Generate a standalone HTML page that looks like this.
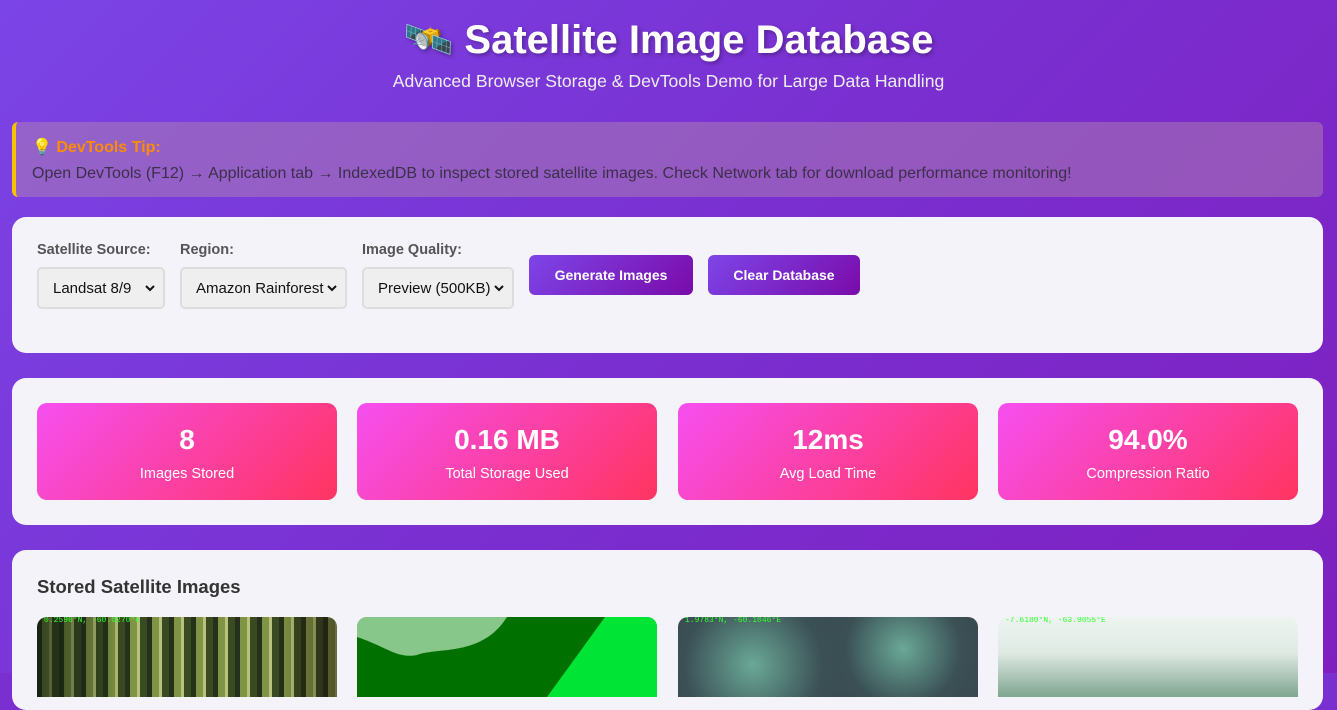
<!DOCTYPE html>
<html style="background:#7a2fd0"><head><meta charset="utf-8"><style>
*{box-sizing:border-box;margin:0;padding:0}
html,body{width:1337px;height:673px;overflow:hidden}
body{font-family:"Liberation Sans",sans-serif;background:linear-gradient(135deg,#7b44e6 0%,#7a2fd0 50%,#7f1fc0 100%);}
h1{text-align:center;color:#fff;font-size:40px;font-weight:bold;padding-top:16px;height:62px;text-shadow:2px 2px 4px rgba(0,0,0,.3)}
.sub{text-align:center;color:#eee;font-size:17.6px;height:60px;padding-top:9px}
.tip{position:absolute;left:12px;top:122px;width:1311px;height:75px;background:rgba(180,140,170,.45);border-left:4px solid #f5c400;border-radius:6px;padding:15px 16px}
.tip b{color:#ff8c00;font-size:16px}
.tip p{color:#3b2f4a;font-size:16px;margin-top:8px}
.panel{position:absolute;left:12px;width:1311px;background:#f5f3fa;border-radius:14px}
label{display:block;font-size:14.5px;font-weight:bold;color:#555;margin-bottom:9px}
.sel{height:42px;border:2px solid #ddd;border-radius:5px;background:#efefef;font-size:15px;color:#111;display:flex;align-items:center;justify-content:space-between;padding:0 8px 0 14px}
.sel svg{flex:none}
.btn{position:absolute;top:38px;height:40px;border-radius:6px;background:linear-gradient(135deg,#7d45e8,#7a0ba9);color:#fff;font-weight:bold;font-size:14px;display:flex;align-items:center;justify-content:center}
.stat{position:absolute;top:25px;width:300px;height:97px;border-radius:10px;background:linear-gradient(135deg,#f64ff0,#ff3460);color:#fff;text-align:center}
.stat .n{font-size:28px;font-weight:bold;margin-top:21px}
.stat .l{font-size:14.5px;margin-top:10px}
.img{position:absolute;top:67px;width:300px;height:80px;border-radius:10px 10px 0 0;overflow:hidden}
.img span{position:absolute;left:7px;top:-1px;font:8px "Liberation Mono",monospace;color:#3f3}
</style></head><body>
<h1>🛰️ Satellite Image Database</h1>
<div class="sub">Advanced Browser Storage &amp; DevTools Demo for Large Data Handling</div>
<div class="tip"><b>💡 DevTools Tip:</b><p>Open DevTools (F12) → Application tab → IndexedDB to inspect stored satellite images. Check Network tab for download performance monitoring!</p></div>
<div class="panel" style="top:217px;height:136px">
 <div style="position:absolute;left:25px;top:25px"><label>Satellite Source:</label><div class="sel" style="width:128px">Landsat 8/9 <svg width="10" height="7"><path d="M1 1l4 4 4-4" stroke="#111" stroke-width="2" fill="none"/></svg></div></div>
 <div style="position:absolute;left:168px;top:25px"><label>Region:</label><div class="sel" style="width:167px">Amazon Rainforest <svg width="10" height="7"><path d="M1 1l4 4 4-4" stroke="#111" stroke-width="2" fill="none"/></svg></div></div>
 <div style="position:absolute;left:350px;top:25px"><label>Image Quality:</label><div class="sel" style="width:152px">Preview (500KB) <svg width="10" height="7"><path d="M1 1l4 4 4-4" stroke="#111" stroke-width="2" fill="none"/></svg></div></div>
 <div class="btn" style="left:517px;width:164px">Generate Images</div>
 <div class="btn" style="left:696px;width:152px">Clear Database</div>
</div>
<div class="panel" style="top:378px;height:147px">
 <div class="stat" style="left:25px"><div class="n">8</div><div class="l">Images Stored</div></div>
 <div class="stat" style="left:345px"><div class="n">0.16 MB</div><div class="l">Total Storage Used</div></div>
 <div class="stat" style="left:666px"><div class="n">12ms</div><div class="l">Avg Load Time</div></div>
 <div class="stat" style="left:986px"><div class="n">94.0%</div><div class="l">Compression Ratio</div></div>
</div>
<div class="panel" style="top:550px;height:160px">
 <div style="position:absolute;left:25px;top:26px;font-size:18.5px;font-weight:bold;color:#333">Stored Satellite Images</div>
 <div class="img" style="left:25px;background:linear-gradient(90deg,rgba(20,30,15,.7),rgba(0,0,0,0) 30%,rgba(0,0,0,0) 80%,rgba(30,20,10,.5)),repeating-linear-gradient(90deg,#26301a 0 5px,#7f9444 5px 12px,#b8c27a 12px 15px,#3a4a22 15px 22px)"><span>0.2596°N, -60.0270°E</span></div>
 <div class="img" style="left:345px;background:#007000"><svg width="300" height="80" style="position:absolute;left:0;top:0"><path d="M0 0H150C125 40 80 30 60 38C40 42 30 30 0 20Z" fill="#88c78a"/><path d="M248 0H300V80H190Z" fill="#00e535"/></svg></div>
 <div class="img" style="left:666px;background:radial-gradient(circle at 25% 60%,#6aa896,#3b5055 30%,transparent 45%),radial-gradient(circle at 75% 40%,#6aa896,#3b5055 25%,transparent 40%),#39474f"><span>1.9783°N, -60.1046°E</span></div>
 <div class="img" style="left:986px;background:linear-gradient(180deg,#eef4f0,#dfeae3 45%,#7fa590)"><span>-7.6180°N, -63.9055°E</span></div>
</div>
</body></html>
